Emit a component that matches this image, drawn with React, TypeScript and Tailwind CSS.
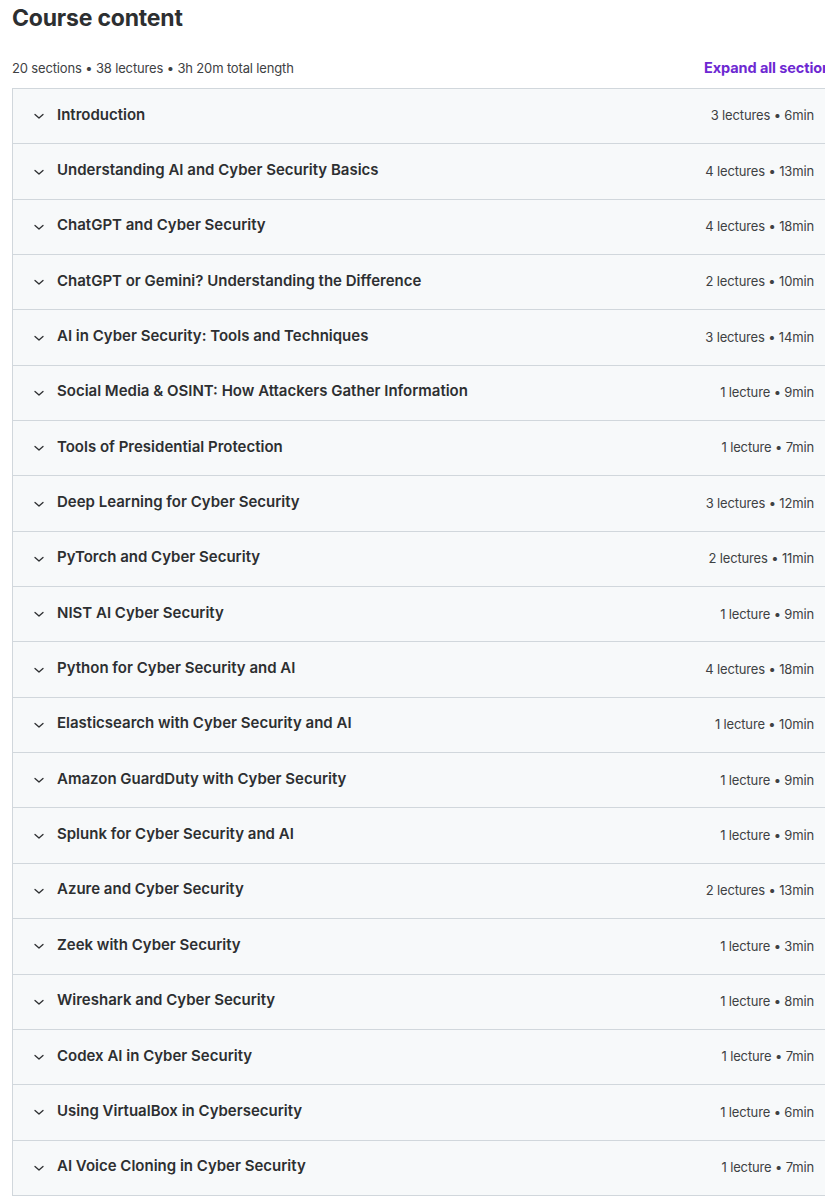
import React from "react"

const sections = [
  { title: "Introduction", lectures: 3, length: "6min" },
  { title: "Understanding AI and Cyber Security Basics", lectures: 4, length: "13min" },
  { title: "ChatGPT and Cyber Security", lectures: 4, length: "18min" },
  { title: "ChatGPT or Gemini? Understanding the Difference", lectures: 2, length: "10min" },
  { title: "AI in Cyber Security: Tools and Techniques", lectures: 3, length: "14min" },
  { title: "Social Media & OSINT: How Attackers Gather Information", lectures: 1, length: "9min" },
  { title: "Tools of Presidential Protection", lectures: 1, length: "7min" },
  { title: "Deep Learning for Cyber Security", lectures: 3, length: "12min" },
  { title: "PyTorch and Cyber Security", lectures: 2, length: "11min" },
  { title: "NIST AI Cyber Security", lectures: 1, length: "9min" },
  { title: "Python for Cyber Security and AI", lectures: 4, length: "18min" },
  { title: "Elasticsearch with Cyber Security and AI", lectures: 1, length: "10min" },
  { title: "Amazon GuardDuty with Cyber Security", lectures: 1, length: "9min" },
  { title: "Splunk for Cyber Security and AI", lectures: 1, length: "9min" },
  { title: "Azure and Cyber Security", lectures: 2, length: "13min" },
  { title: "Zeek with Cyber Security", lectures: 1, length: "3min" },
  { title: "Wireshark and Cyber Security", lectures: 1, length: "8min" },
  { title: "Codex AI in Cyber Security", lectures: 1, length: "7min" },
  { title: "Using VirtualBox in Cybersecurity", lectures: 1, length: "6min" },
  { title: "AI Voice Cloning in Cyber Security", lectures: 1, length: "7min" },
]

function Chevron() {
  return (
    <svg width="12" height="12" viewBox="0 0 12 12" className="shrink-0 text-[#2d2f31]">
      <polyline points="2,4.5 6,8 10,4.5" fill="none" stroke="currentColor" strokeWidth="1.3" strokeLinecap="round" strokeLinejoin="round" />
    </svg>
  )
}

export default function App() {
  return (
    <div className="w-[825px] overflow-hidden bg-white font-['Inter',sans-serif] text-[#2d2f31]">
      <div className="w-[839px] pl-[12px]">
        <h2 className="text-[23px] leading-[36px] font-bold tracking-[-0.2px]">Course content</h2>
        <div className="mt-[22px] mb-[10px] flex items-center justify-between h-[20px]">
          <span className="mt-[1px] text-[13px] tracking-[-0.15px] text-[#3e4143]">20 sections • 38 lectures • 3h 20m total length</span>
          <button className="-mt-[1px] text-[14.5px] font-bold tracking-[-0.1px] text-[#6d28d2]">Expand all sections</button>
        </div>
        <div className="border border-[#d1d7dc] border-b-0">
          {sections.map((s) => (
            <div
              key={s.title}
              className="flex h-[55.35px] items-center justify-between border-b border-[#d1d7dc] bg-[#f7f9fa] pl-[20px] pr-[24px]"
            >
              <div className="flex items-center gap-[12px]">
                <Chevron />
                <span className="text-[15px] font-semibold leading-[20px] -mt-[3px]">{s.title}</span>
              </div>
              <span className="text-[13px] tracking-[-0.15px] text-[#3e4143]">
                {s.lectures} {s.lectures === 1 ? "lecture" : "lectures"} • {s.length}
              </span>
            </div>
          ))}
        </div>
      </div>
    </div>
  )
}
